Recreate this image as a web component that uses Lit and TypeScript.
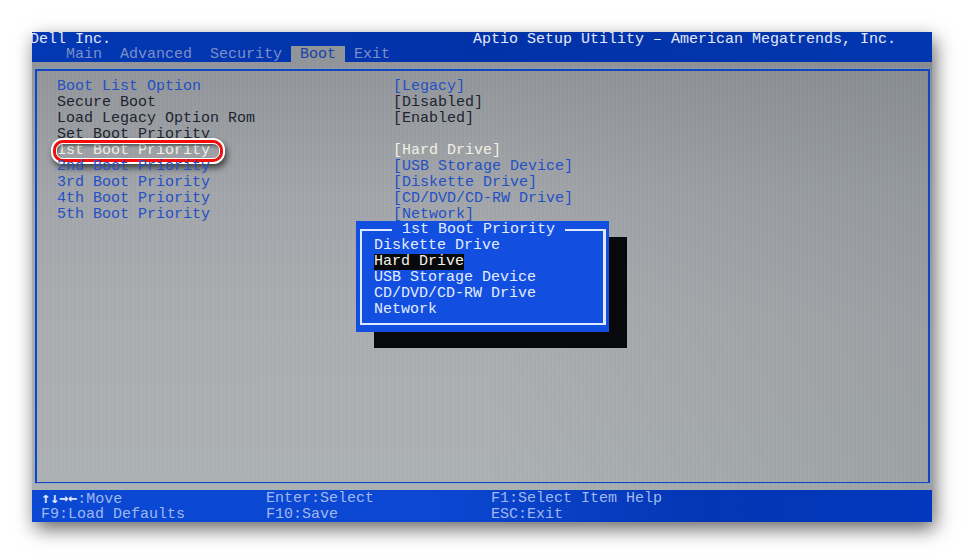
import { LitElement, html, css, nothing } from "lit";
import { customElement, property, state } from "lit/decorators.js";
import { classMap } from "lit/directives/class-map.js";

type Tone = "link" | "fixed" | "active";

interface Setting {
  label: string;
  value?: string;
  tone: Tone;
  marked?: boolean;
}

const TABS = ["Main", "Advanced", "Security", "Boot", "Exit"];

const SETTINGS: Setting[] = [
  { label: "Boot List Option", value: "Legacy", tone: "link" },
  { label: "Secure Boot", value: "Disabled", tone: "fixed" },
  { label: "Load Legacy Option Rom", value: "Enabled", tone: "fixed" },
  { label: "Set Boot Priority", tone: "fixed" },
  { label: "1st Boot Priority", value: "Hard Drive", tone: "active", marked: true },
  { label: "2nd Boot Priority", value: "USB Storage Device", tone: "link" },
  { label: "3rd Boot Priority", value: "Diskette Drive", tone: "link" },
  { label: "4th Boot Priority", value: "CD/DVD/CD-RW Drive", tone: "link" },
  { label: "5th Boot Priority", value: "Network", tone: "link" },
];

const DEVICES = ["Diskette Drive", "Hard Drive", "USB Storage Device", "CD/DVD/CD-RW Drive", "Network"];

const reset = css`
  * {
    box-sizing: border-box;
  }
  button {
    font: inherit;
    color: inherit;
    background: none;
    border: 0;
    margin: 0;
    padding: 0;
    text-align: left;
    white-space: nowrap;
    cursor: pointer;
  }
`;

@customElement("device-popup")
export class DevicePopup extends LitElement {
  @property() heading = "";
  @state() private chosen = "Hard Drive";

  static styles = [
    reset,
    css`
      :host {
        display: block;
        padding: 1px 3px 7px 4px;
        background: #124fe0;
        color: #e4edff;
        box-shadow: 18px 16px 0 #07090c;
      }
      .frame {
        margin: 0;
        padding: 0 38px 5px 12px;
        min-width: 0;
        border: 2px solid #dce8ff;
        border-right-width: 3px;
      }
      .heading {
        margin-left: 18px;
        padding: 0 10px;
        line-height: 16px;
      }
      .device {
        display: block;
        height: 16px;
        line-height: 16px;
      }
      .chosen {
        background: #07090c;
        color: #f6f2e6;
      }
    `,
  ];

  render() {
    return html`
      <fieldset class="frame">
        <legend class="heading">${this.heading}</legend>
        ${DEVICES.map(
          (d) => html`<button
            class=${classMap({ device: true, chosen: d === this.chosen })}
            aria-pressed=${d === this.chosen}
            @click=${() => (this.chosen = d)}
          >${d}</button>`
        )}
      </fieldset>
    `;
  }
}

@customElement("app-root")
export class AppRoot extends LitElement {
  @state() private tab = "Boot";

  static styles = [
    reset,
    css`
      :host {
        display: block;
        box-sizing: border-box;
        padding: 32px;
        background: #fff;
        font: 15px/16px "Liberation Mono", monospace;
      }
      .screen {
        position: relative;
        display: flex;
        flex-direction: column;
        min-height: calc(100vh - 64px);
        box-shadow: 3px 7px 18px rgba(0, 0, 0, 0.6);
      }
      .top {
        overflow: hidden;
        background: linear-gradient(90deg, #0338b4, #0232a8 50%, #0236b0);
      }
      .titles {
        display: grid;
        grid-template-columns: 443px 1fr;
        height: 14px;
        margin-left: -2px;
        color: #e2e8fa;
        white-space: pre;
      }
      .tabs {
        display: flex;
        padding-left: 25px;
        color: #7c90c8;
      }
      .tab {
        height: 16px;
        padding: 2px 9px 0;
        line-height: 14px;
      }
      .current {
        background: #8f9598;
        color: #1c3fa8;
      }
      .body {
        flex: 1;
        display: flex;
        padding: 7px 2px 7px 3px;
        background:
          repeating-linear-gradient(90deg, rgba(255, 255, 255, 0.03) 0 2px, transparent 2px 4px),
          linear-gradient(90deg, transparent 50%, rgba(85, 92, 98, 0.18)),
          linear-gradient(180deg, #909498, #a0a4a8 30%, #a9acaf 60%, #abb0b2);
      }
      .panel {
        flex: 1;
        border: 2px solid #1644bd;
        border-bottom-width: 1px;
        padding: 8px 20px;
        box-shadow: 0 0 0 1px rgba(110, 170, 205, 0.5);
      }
      .row {
        display: grid;
        grid-template-columns: 336px 1fr;
        justify-items: start;
        height: 16px;
      }
      .link {
        color: #2450c4;
      }
      .fixed {
        color: #1c2430;
      }
      .active {
        color: #f2efe4;
      }
      .label {
        position: relative;
      }
      .ring {
        position: absolute;
        inset: -5px -15px -5px -6px;
        border: 2px solid #fff;
        border-radius: 12px;
        box-shadow: 2px 4px 6px rgba(0, 0, 0, 0.6);
      }
      .ring::before {
        content: "";
        position: absolute;
        inset: 0;
        border: 3px solid #f20d0d;
        border-radius: 10px;
      }
      .ring::after {
        content: "";
        position: absolute;
        inset: 3px;
        border: 1px solid #fff;
        border-radius: 7px;
        box-shadow: inset 1px 2px 3px rgba(0, 0, 0, 0.45);
      }
      .popup {
        position: absolute;
        left: 324px;
        top: 189px;
      }
      .keys {
        display: grid;
        grid-template-columns: 1fr 1fr 2fr;
        grid-auto-rows: 15px;
        row-gap: 1px;
        padding-top: 1px;
        background: linear-gradient(90deg, #0a48d4, #0b47d2 45%, #0436b4 75%, #0238be);
        color: #a0b8ef;
      }
      .keys span {
        padding-left: 9px;
        white-space: nowrap;
      }
      .arrows {
        font-family: "DejaVu Sans Mono", monospace;
        line-height: 1;
        color: #dce6fc;
      }
    `,
  ];

  render() {
    return html`
      <div class="screen">
        <header class="top">
          <div class="titles">
            <span>Dell Inc.</span>
            <span>Aptio Setup Utility – American Megatrends, Inc.</span>
          </div>
          <nav class="tabs">
            ${TABS.map(
              (t) => html`<button
                class=${classMap({ tab: true, current: t === this.tab })}
                @click=${() => (this.tab = t)}
              >${t}</button>`
            )}
          </nav>
        </header>
        <main class="body">
          <section class="panel">
            ${SETTINGS.map(
              (s, i) => html`<div class="row ${s.tone}">
                <span class="label" id="label-${i}">${s.label}${s.marked ? html`<i class="ring"></i>` : nothing}</span>
                ${s.value ? html`<button aria-describedby="label-${i}">[${s.value}]</button>` : nothing}
              </div>`
            )}
          </section>
        </main>
        <footer class="keys">
          <span><b class="arrows">↑↓→←</b>:Move</span>
          <span>Enter:Select</span>
          <span>F1:Select Item Help</span>
          <span>F9:Load Defaults</span>
          <span>F10:Save</span>
          <span>ESC:Exit</span>
        </footer>
        <device-popup class="popup" heading="1st Boot Priority"></device-popup>
      </div>
    `;
  }
}
